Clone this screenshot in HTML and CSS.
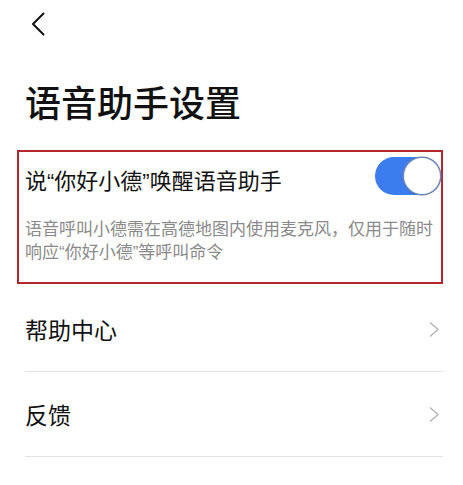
FILE: index.html
```html
<!DOCTYPE html>
<html lang="zh-CN">
<head>
  <meta charset="UTF-8" />
  <meta name="viewport" content="width=device-width, initial-scale=1.0" />
  <title>语音助手设置</title>
  <link rel="stylesheet" href="styles.css">
</head>
<body>
  <div class="page">
    <div class="topbar">
      <svg class="back" width="14" height="24" viewBox="0 0 14 24">
        <polyline points="12.5,1.5 2,12 12.5,22.5" fill="none" stroke="#111" stroke-width="2" stroke-linecap="round" stroke-linejoin="round" />
      </svg>
    </div>

    <h1 class="title">语音助手设置</h1>

    <div class="wake-box">
      <div class="wake-row">
        <span class="wake-label">说“你好小德”唤醒语音助手</span>
        <div class="toggle on"><div class="knob"></div></div>
      </div>
      <p class="wake-desc">语音呼叫小德需在高德地图内使用麦克风，仅用于随时响应“你好小德”等呼叫命令</p>
    </div>

    <div class="menu">
      <div class="menu-item">
        <span>帮助中心</span>
        <svg class="arrow" width="12" height="17" viewBox="0 0 12 17">
          <polyline points="2,1.5 10,8.5 2,15.5" fill="none" stroke="#b3b3b3" stroke-width="1.4" stroke-linejoin="round" />
        </svg>
      </div>
      <div class="menu-item">
        <span>反馈</span>
        <svg class="arrow" width="12" height="17" viewBox="0 0 12 17">
          <polyline points="2,1.5 10,8.5 2,15.5" fill="none" stroke="#b3b3b3" stroke-width="1.4" stroke-linejoin="round" />
        </svg>
      </div>
    </div>
  </div>
</body>
</html>
```

FILE: styles.css
```css
body { margin: 0; background: #fff; font-family: "Liberation Sans", "Noto Sans CJK SC", sans-serif; color: #111; }
.page { width: 463px; }
.topbar { height: 50px; padding-left: 31px; display: flex; align-items: center; box-sizing: border-box; }
.back { display: block; margin-top: -2px; }
.title { margin: 30px 0 20px 25px; font-size: 36px; line-height: 50px; font-weight: 500; color: #111; letter-spacing: 0; }
.wake-box { margin: 0 20px 0 17px; border: 2px solid #b3262e; padding: 5px 0 18px 6px; }
.wake-row { display: flex; justify-content: space-between; align-items: flex-start; }
.wake-label { font-size: 22px; line-height: 30px; padding-top: 10px; color: #111; }
.toggle { width: 66px; height: 38px; border-radius: 19px; background: #3b7cee; position: relative; flex-shrink: 0; }
.knob { position: absolute; right: 1px; top: 1px; width: 36px; height: 36px; border-radius: 50%; background: #fff; box-shadow: 0 0 0 1.5px #6a86b8, 0 1px 2px rgba(0,0,0,0.25); }
.wake-desc { margin: 21px 0 0 0; font-size: 17px; line-height: 23px; color: #8a8a8a; }
.menu { margin: 3px 20px 0 25px; }
.menu-item { height: 85px; border-bottom: 1px solid #e3e3e3; display: flex; align-items: center; justify-content: space-between; font-size: 23px; color: #111; box-sizing: border-box; }
.arrow { display: block; margin-right: 3px; }
```
